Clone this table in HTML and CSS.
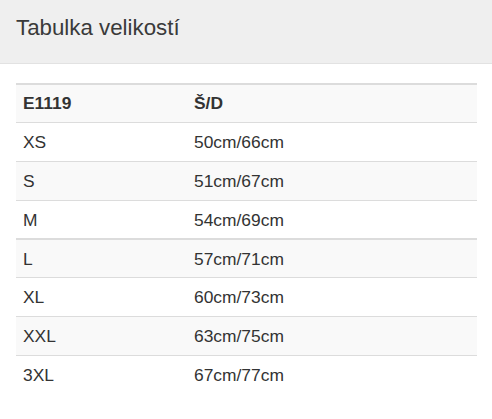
FILE: index.html
```html
<!DOCTYPE html>
<html lang="cs">
<head>
<meta charset="utf-8">
<title>Tabulka velikostí</title>
<link rel="stylesheet" href="styles.css">
</head>
<body>
<div class="panel">
  <div class="panel-header"><h4 class="title">Tabulka velikostí</h4></div>
  <div class="panel-body">
    <table class="sizes">
      <thead>
        <tr><th class="c1">E1119</th><th>Š/D</th></tr>
      </thead>
      <tbody class="grp1">
        <tr><td>XS</td><td>50cm/66cm</td></tr>
        <tr class="odd"><td>S</td><td>51cm/67cm</td></tr>
        <tr><td>M</td><td>54cm/69cm</td></tr>
      </tbody>
      <tbody class="grp">
        <tr class="odd"><td>L</td><td>57cm/71cm</td></tr>
        <tr><td>XL</td><td>60cm/73cm</td></tr>
        <tr class="odd"><td>XXL</td><td>63cm/75cm</td></tr>
        <tr><td>3XL</td><td>67cm/77cm</td></tr>
      </tbody>
    </table>
  </div>
</div>
</body>
</html>
```
FILE: styles.css
```css
html, body {
  margin: 0;
  padding: 0;
  background: #fff;
}
body {
  font-family: "Liberation Sans", Arial, sans-serif;
  color: #333;
}
.panel-header {
  background: #efefef;
  border-bottom: 1px solid #e2e2e2;
  height: 64px;
  box-sizing: border-box;
  padding: 14px 16px 0 16px;
}
.title {
  margin: 0;
  font-weight: normal;
  font-size: 22.3px;
  line-height: 28px;
  color: #3a3a3a;
}
.panel-body {
  padding: 19px 15px 0 16px;
}
.sizes {
  width: 100%;
  border-collapse: collapse;
  font-size: 17.4px;
}
.sizes th, .sizes td {
  text-align: left;
  padding: 8px 7px 8px 7px;
  line-height: 22px;
  height: 22px;
  border-top: 1px solid #dcdcdc;
}
.sizes thead th {
  background: #f9f9f9;
  border-top: 2px solid #dcdcdc;
  border-bottom: 1px solid #dcdcdc;
  font-weight: bold;
  padding-top: 7px;
  padding-bottom: 8px;
}
.sizes .c1 {
  width: 157px;
}
.sizes tr.odd td {
  background: #f9f9f9;
}
.sizes tbody.grp1 tr:last-child td {
  padding-bottom: 7px;
}
.sizes tbody.grp tr:first-child td {
  border-top: 2px solid #dcdcdc;
  padding-bottom: 7px;
}
```
